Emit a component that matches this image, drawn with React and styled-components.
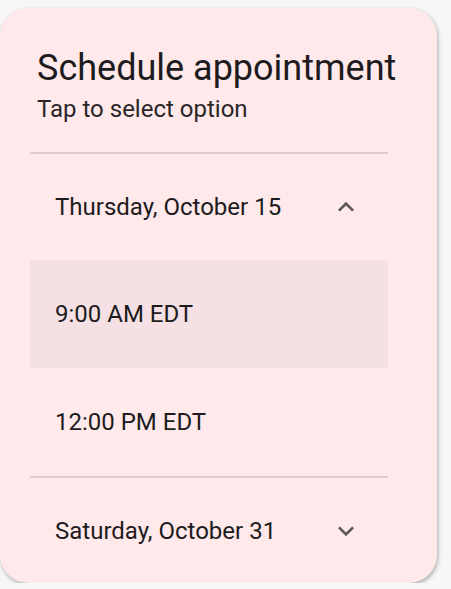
import React, { useState } from 'react';
import styled, { createGlobalStyle } from 'styled-components';

const GlobalStyle = createGlobalStyle`
  body {
    margin: 0;
    background: #f7f7f7;
    font-family: Roboto, "Liberation Sans", sans-serif;
    color: #1d1b20;
  }
`;

//Card shell
const Card = styled.div`
  box-sizing: border-box;
  margin-top: 8px;
  width: 437px;
  height: 575px;
  border-radius: 28px;
  background: #ffe9ea;
  box-shadow: 1px 2px 4px rgba(0, 0, 0, 0.3);
  overflow: hidden;
  padding: 38px 49px 0 30px;
`;

const Header = styled.div`
  padding-left: 7px;
  padding-bottom: 27px;
  white-space: nowrap;
`;

const Title = styled.h1`
  margin: 0;
  font-size: 36px;
  line-height: 44px;
  font-weight: 400;
`;

const Subtitle = styled.p`
  margin: 3px 0 0;
  font-size: 24px;
  line-height: 32px;
  color: #2a2527;
`;

const Divider = styled.div`
  height: 2px;
  background: #e0cbcd;
`;

const Row = styled.div`
  display: flex;
  align-items: center;
  justify-content: space-between;
  height: ${(p) => p.$h || 107}px;
  padding: 0 26px 0 25px;
  font-size: 24px;
  white-space: nowrap;
  background: ${(p) => (p.$selected ? '#f5e1e3' : 'transparent')};
  cursor: pointer;
`;

const Chevron = ({ up }) => (
  <svg width="32" height="32" viewBox="0 0 24 24" fill="#5c5658">
    {up ? (
      <path d="M12 8l-6 6 1.41 1.41L12 10.83l4.59 4.58L18 14z" />
    ) : (
      <path d="M16.59 8.59L12 13.17 7.41 8.59 6 10l6 6 6-6z" />
    )}
  </svg>
);

const slots = ['9:00 AM EDT', '12:00 PM EDT'];

function App() {
  const [selected, setSelected] = useState(0);

  return (
    <>
      <GlobalStyle />
      <Card>
        <Header>
          <Title>Schedule appointment</Title>
          <Subtitle>Tap to select option</Subtitle>
        </Header>
        <Divider />
        <Row $h={106}>
          Thursday, October 15
          <Chevron up />
        </Row>
        {slots.map((s, i) => (
          <Row key={s} $h={108} $selected={selected === i} onClick={() => setSelected(i)}>
            {s}
          </Row>
        ))}
        <Divider />
        <Row $h={105}>
          Saturday, October 31
          <Chevron />
        </Row>
      </Card>
    </>
  );
}

export default App;
